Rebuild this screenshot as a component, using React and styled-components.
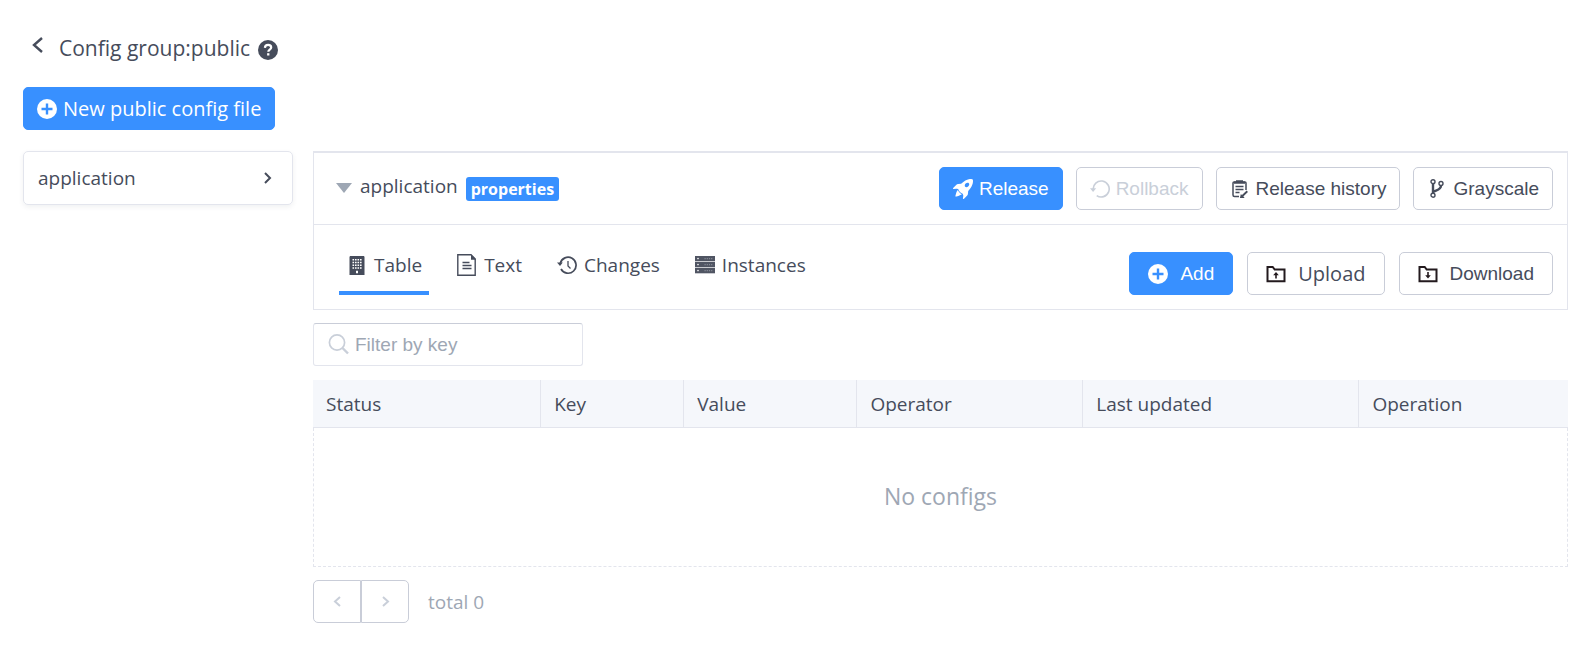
import React, { useState } from "react";
import styled, { createGlobalStyle, css } from "styled-components";
import { BsRocketTakeoffFill } from "react-icons/bs";

const color = {
  primary: "#3890ff",
  text: "#464c5b",
  border: "#e3e5ed",
  control: "#c9cdd8",
  muted: "#9ea7b4",
  disabled: "#c9cfd9",
  head: "#f5f7fb",
};

const uiFont = `"Open Sans", "Noto Sans", sans-serif`;
const controlFont = `"Liberation Sans", Arial, sans-serif`;

const GlobalStyle = createGlobalStyle`
  *, *::before, *::after { box-sizing: border-box; }
  body {
    margin: 0;
    background: #fff;
    color: ${color.text};
    font: 19px/24px ${uiFont};
  }
  button, input { font: inherit; color: inherit; margin: 0; }
  svg { display: block; flex: none; }
`;

/* ---------- icons ---------- */

const Svg = ({ w = 20, h = 20, box, children, ...rest }) => (
  <svg width={w} height={h} viewBox={box || `0 0 ${w} ${h}`} fill="none" aria-hidden="true" {...rest}>
    {children}
  </svg>
);

const Chevron = ({ w, h, flip, stroke = 2 }) => (
  <Svg w={w} h={h}>
    <path
      d={flip ? `M2 2 L${w - 2} ${h / 2} L2 ${h - 2}` : `M${w - 2} 2 L2 ${h / 2} L${w - 2} ${h - 2}`}
      stroke="currentColor"
      strokeWidth={stroke}
    />
  </Svg>
);

const HelpIcon = () => (
  <Svg>
    <circle cx="10" cy="10" r="10" fill="currentColor" />
    <path d="M6.9 7.9C7 5.9 8.3 4.9 10.1 4.9c1.8 0 3.1 1 3.1 2.6 0 2.2-2.9 2.2-2.9 4.3" stroke="#fff" strokeWidth="2.2" />
    <rect x="9.1" y="13.2" width="2.3" height="2.3" fill="#fff" />
  </Svg>
);

const PlusIcon = () => (
  <Svg>
    <circle cx="10" cy="10" r="10" fill="#fff" />
    <path d="M10 4.5v11M4.5 10h11" stroke={color.primary} strokeWidth="2.4" />
  </Svg>
);

const RollbackIcon = () => (
  <Svg>
    <path d="M3.2 10.5A8 8 0 1 1 6.7 16.6" stroke="currentColor" strokeWidth="1.6" />
    <path d="M0 9.2h6.2L3.1 13z" fill="currentColor" />
  </Svg>
);

const HistoryIcon = () => (
  <Svg>
    <path d="M3.3 8.3A8 8 0 1 1 4 14" stroke="currentColor" strokeWidth="1.7" />
    <path d="M0 7.5h5.8L3 11z" fill="currentColor" />
    <path d="M11 6v5l2.5 2.5" stroke="currentColor" strokeWidth="1.3" />
  </Svg>
);

const ClipboardIcon = () => (
  <Svg h={18} box="-2 0 20 18">
    <path d="M7 16.5H2.500a1.500 1.500 0 0 1-1.500-1.500V3a1 1 0 0 1 1-1h11a1 1 0 0 1 1 1v7" stroke="currentColor" strokeWidth="1.5" />
    <path d="M4 .3h7v3H4zM2 1.500h11v2.300H2z" fill="currentColor" />
    <path d="M3.500 6.500h8M3.500 9.500h8M3.500 12.500h4" stroke="currentColor" strokeWidth="1.3" />
    <path d="m15.300 11.300-5.200 4.900M9 17.500l.4-1.600 1.300 1.300z" stroke="currentColor" strokeWidth="1.9" />
  </Svg>
);

const BranchIcon = () => (
  <Svg h={19} box="-3 0 20 19">
    <circle cx="3" cy="2.7" r="2" stroke="currentColor" strokeWidth="1.4" />
    <circle cx="3" cy="16.2" r="2" stroke="currentColor" strokeWidth="1.4" />
    <circle cx="11" cy="4.5" r="2" stroke="currentColor" strokeWidth="1.4" />
    <path d="M3 4.500v9.800M11 6.500c0 4.500-4.500 4.500-8 6.500" stroke="currentColor" strokeWidth="2.4" />
  </Svg>
);

const FolderIcon = ({ down }) => (
  <Svg w={20} h={18}>
    <path d="M1.500 2h5.200l2 2.500h9.800v11.700h-17z" stroke="#231a1e" strokeWidth="2" />
    <path d={down ? "M10 7v4" : "M10 13.500V10"} stroke="#231a1e" strokeWidth="1.6" />
    <path d={down ? "M7.200 10.300h5.600L10 13.500z" : "M7.200 10.300h5.600L10 7z"} fill="#231a1e" />
  </Svg>
);

const BuildingIcon = () => (
  <Svg h={19}>
    <path fill="currentColor" d="M3 0h14v.5h.5V19h-15V.5H3z" />
    <path
      d="M5.500 3.800h9.200M5.500 6.500h9.200M5.500 9.200h9.200M5.500 11.900h9.200"
      stroke="#fff"
      strokeWidth="1.5"
      strokeDasharray="1.6 .9"
    />
    <path d="M9 14.800h2v2.400H9z" fill="#fff" />
  </Svg>
);

const DocIcon = () => (
  <Svg h={22}>
    <path d="M14 .8H.8v20.400h17.400V5z" stroke="currentColor" strokeWidth="1.4" />
    <path d="M14 .5 18.700 5v.8H14z" fill="currentColor" />
    <path d="M5.500 8.500h7M5.500 11.500h9M5.500 14.500h9" stroke="currentColor" strokeWidth="1.4" />
  </Svg>
);

const ServersIcon = () => (
  <Svg h={18}>
    {[0, 6, 12].map((y) => (
      <g key={y}>
        <rect y={y} width="20" height="5.3" fill="#505563" />
        <circle cx="3" cy={y + 2.6} r=".8" fill="#fff" />
        <path d={`M9.500 ${y + 2.6}h8`} stroke="#858a96" strokeWidth="1.4" strokeDasharray="1.2 1" />
      </g>
    ))}
  </Svg>
);

const SearchIcon = () => (
  <Svg w={21} h={21}>
    <circle cx="9" cy="8.5" r="7.6" stroke="currentColor" strokeWidth="1.7" />
    <path d="m14.500 14 5.500 5.500" stroke="currentColor" strokeWidth="2.4" />
  </Svg>
);

const CaretDown = () => (
  <Svg w={16} h={14}>
    <path d="M0 4h16L8 14z" fill={color.muted} />
  </Svg>
);

/* ---------- layout ---------- */

const Page = styled.div`
  padding: 32px 10px 22px 23px;
`;

const Header = styled.header`
  display: flex;
  align-items: center;
  height: 32px;
  padding-left: 9px;
`;

const IconButton = styled.button`
  display: flex;
  padding: 0;
  border: 0;
  background: none;
  cursor: pointer;
`;

const BackButton = styled(IconButton)`
  margin: 0 15px 6px 0;
`;

const Title = styled.h1`
  margin: 0 8px 0 0;
  font-size: 21px;
  font-weight: 400;
`;

const HelpButton = styled(IconButton)`
  margin-top: 3px;
`;

const Toolbar = styled.div`
  display: flex;
  margin: 23px 0 21px;
`;

const variants = {
  primary: css`
    background: ${color.primary};
    border-color: ${color.primary};
    color: #fff;
  `,
  outline: css`
    background: #fff;
    border-color: ${color.control};
    color: ${color.text};
  `,
};

const Button = styled.button`
  display: inline-flex;
  align-items: center;
  gap: ${(p) => (p.$wide ? 12 : 6)}px;
  height: 43px;
  padding: 0 ${(p) => (p.$wide ? 18 : 13)}px;
  border: 1px solid;
  border-radius: 5px;
  font-family: ${(p) => (p.$ui ? uiFont : controlFont)};
  font-size: ${(p) => (p.$ui ? 20 : 19)}px;
  font-weight: ${(p) => (p.$strong ? 500 : 400)};
  white-space: nowrap;
  cursor: pointer;
  ${(p) => variants[p.$variant || "outline"]}

  &:disabled {
    color: ${color.disabled};
    cursor: not-allowed;
  }
`;

const Columns = styled.div`
  display: flex;
  align-items: flex-start;
  gap: 20px;
`;

const Sidebar = styled.nav`
  flex: 0 0 270px;
`;

const FileLink = styled.a`
  display: flex;
  align-items: center;
  justify-content: space-between;
  height: 54px;
  padding: 0 20px 0 14px;
  border: 1px solid ${color.border};
  border-radius: 5px;
  box-shadow: 0 2px 5px rgba(70, 76, 91, 0.08);
  color: inherit;
  text-decoration: none;
`;

const Main = styled.main`
  flex: 1;
  min-width: 0;
`;

const Panel = styled.section`
  border: 1px solid ${color.border};
  border-top-width: 2px;
`;

const PanelRow = styled.div`
  display: flex;
  justify-content: space-between;
  align-items: ${(p) => (p.$tabs ? "flex-end" : "center")};
  padding: ${(p) => (p.$tabs ? "27px 14px 14px 25px" : "14px 14px 14px 22px")};

  & + & {
    border-top: 1px solid ${color.border};
  }
`;

const FileName = styled.div`
  display: flex;
  align-items: center;
  gap: 8px;
  padding-bottom: 6px;
`;

const FormatTag = styled.span`
  margin-top: 6px;
  padding: 0 5px;
  border-radius: 3px;
  background: ${color.primary};
  color: #fff;
  font-size: 16px;
  font-weight: 700;
`;

const Actions = styled.div`
  display: flex;
  gap: ${(p) => p.$gap || 13}px;
`;

const Tabs = styled.div`
  display: flex;
  gap: 20px;
`;

const Tab = styled.button`
  display: flex;
  align-items: center;
  gap: 7px;
  padding: 0 7px 14px 8px;
  border: 0;
  border-bottom: 4px solid ${(p) => (p["aria-selected"] ? color.primary : "transparent")};
  background: none;
  cursor: pointer;
`;

const Filter = styled.label`
  display: flex;
  align-items: center;
  gap: 6px;
  width: 270px;
  height: 43px;
  margin: 13px 0 14px;
  padding: 0 14px;
  border: 1px solid ${color.border};
  border-top-color: ${color.control};
  border-radius: 3px;
  color: ${color.disabled};
`;

const FilterInput = styled.input`
  flex: 1;
  min-width: 0;
  padding: 0;
  border: 0;
  outline: 0;
  background: none;
  color: ${color.text};
  font-family: ${controlFont};

  &::placeholder {
    color: ${color.muted};
    opacity: 1;
  }
`;

const Table = styled.table`
  width: 100%;
  table-layout: fixed;
  border-collapse: separate;
  border-spacing: 0;
`;

const HeadCell = styled.th`
  width: ${(p) => p.$width}%;
  height: 48px;
  padding: 0 13px;
  border-bottom: 1px solid ${color.border};
  background: ${color.head};
  font-weight: 400;
  text-align: left;

  & + & {
    border-left: 1px solid ${color.border};
  }
`;

const EmptyCell = styled.td`
  height: 139px;
  padding: 0 0 2px;
  border: 1px dashed ${color.border};
  border-top: 0;
  color: ${color.muted};
  font-size: 23px;
  text-align: center;
`;

const Pagination = styled.div`
  display: flex;
  align-items: center;
  gap: 19px;
  margin-top: 13px;
  color: ${color.muted};
`;

const Pager = styled.div`
  display: flex;
`;

const PageButton = styled.button`
  display: flex;
  align-items: center;
  justify-content: center;
  width: 48px;
  height: 43px;
  padding: 0;
  border: 1px solid ${color.control};
  border-radius: 5px 0 0 5px;
  background: #fff;
  color: ${color.disabled};

  & + & {
    border-radius: 0 5px 5px 0;
  }
`;

/* ---------- content ---------- */

const tabs = [
  { name: "Table", Icon: BuildingIcon },
  { name: "Text", Icon: DocIcon },
  { name: "Changes", Icon: HistoryIcon },
  { name: "Instances", Icon: ServersIcon },
];

const columns = [
  { name: "Status", width: 18.1 },
  { name: "Key", width: 11.4 },
  { name: "Value", width: 13.8 },
  { name: "Operator", width: 18 },
  { name: "Last updated", width: 22 },
  { name: "Operation", width: 16.7 },
];

export default function App() {
  const [active, setActive] = useState("Table");
  const [filter, setFilter] = useState("");

  return (
    <Page>
      <GlobalStyle />
      <Header>
        <BackButton type="button" aria-label="Back">
          <Chevron w={12} h={18} stroke={2.4} />
        </BackButton>
        <Title>Config group:public</Title>
        <HelpButton type="button" aria-label="Help">
          <HelpIcon />
        </HelpButton>
      </Header>

      <Toolbar>
        <Button type="button" $variant="primary" $ui $strong>
          <PlusIcon />
          New public config file
        </Button>
      </Toolbar>

      <Columns>
        <Sidebar aria-label="Config files">
          <FileLink href="#application">
            application
            <Chevron w={9} h={14} flip />
          </FileLink>
        </Sidebar>

        <Main>
          <Panel>
            <PanelRow>
              <FileName>
                <CaretDown />
                application
                <FormatTag>properties</FormatTag>
              </FileName>
              <Actions>
                <Button type="button" $variant="primary">
                  <BsRocketTakeoffFill size={20} aria-hidden="true" />
                  Release
                </Button>
                <Button type="button" disabled>
                  <RollbackIcon />
                  Rollback
                </Button>
                <Button type="button">
                  <ClipboardIcon />
                  Release history
                </Button>
                <Button type="button">
                  <BranchIcon />
                  Grayscale
                </Button>
              </Actions>
            </PanelRow>
            <PanelRow $tabs>
              <Tabs role="tablist">
                {tabs.map(({ name, Icon }) => (
                  <Tab
                    key={name}
                    type="button"
                    role="tab"
                    aria-selected={active === name}
                    onClick={() => setActive(name)}
                  >
                    <Icon />
                    {name}
                  </Tab>
                ))}
              </Tabs>
              <Actions $gap={14}>
                <Button type="button" $variant="primary" $wide>
                  <PlusIcon />
                  Add
                </Button>
                <Button type="button" $wide $ui>
                  <FolderIcon />
                  Upload
                </Button>
                <Button type="button" $wide>
                  <FolderIcon down />
                  Download
                </Button>
              </Actions>
            </PanelRow>
          </Panel>

          <Filter>
            <SearchIcon />
            <FilterInput
              type="text"
              aria-label="Filter by key"
              placeholder="Filter by key"
              value={filter}
              onChange={(e) => setFilter(e.target.value)}
            />
          </Filter>

          <Table>
            <thead>
              <tr>
                {columns.map(({ name, width }) => (
                  <HeadCell key={name} scope="col" $width={width}>
                    {name}
                  </HeadCell>
                ))}
              </tr>
            </thead>
            <tbody>
              <tr>
                <EmptyCell colSpan={columns.length}>No configs</EmptyCell>
              </tr>
            </tbody>
          </Table>

          <Pagination>
            <Pager>
              <PageButton type="button" aria-label="Previous page" disabled>
                <Chevron w={9} h={13} />
              </PageButton>
              <PageButton type="button" aria-label="Next page" disabled>
                <Chevron w={9} h={13} flip />
              </PageButton>
            </Pager>
            <span>total 0</span>
          </Pagination>
        </Main>
      </Columns>
    </Page>
  );
}
